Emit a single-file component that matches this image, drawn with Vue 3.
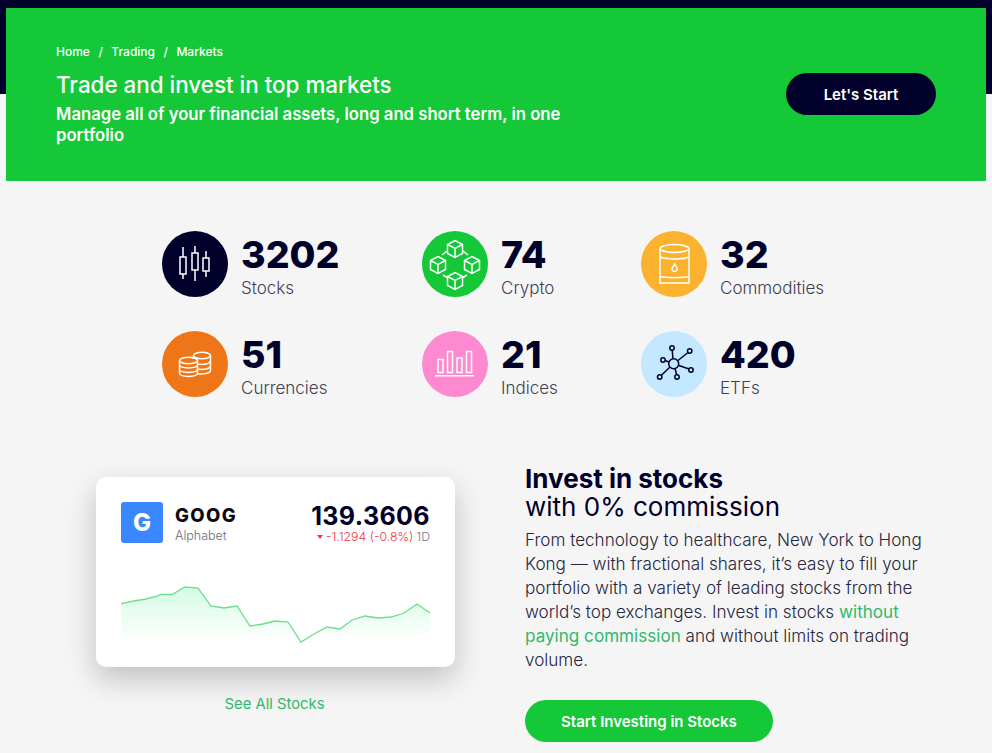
<script setup>
const line = [[121,602.7],[134,600],[146,598],[158,595],[160,593.5],[172,593.5],[185,586],[198,587],[211,605],[224,607],[237,605],[250,625],[263,623],[275,620],[288,621],[301,641],[314,633],[327,626],[340,628],[352,619],[365,615],[378,617],[391,616],[404,612],[417,603],[430,612]]
const toPath = line.map(([x, y]) => `${x - 121},${y - 580}`).join(' ')
const area = `0,60 ${toPath} 309,60`
const stats = [
  { n: '3202', l: 'Stocks', c: '#00002a', i: 'candle' },
  { n: '74', l: 'Crypto', c: '#14c837', i: 'blocks' },
  { n: '32', l: 'Commodities', c: '#fbb32f', i: 'barrel' },
  { n: '51', l: 'Currencies', c: '#ee7518', i: 'coins' },
  { n: '21', l: 'Indices', c: '#fd8ad1', i: 'bars' },
  { n: '420', l: 'ETFs', c: '#c3e8ff', i: 'net' },
]
const cube = (x, y) => `M${x} ${y-8.5}l7.500 4v9l-7.500 4l-7.500-4v-9zM${x-7.5} ${y-4.5}l7.500 4l7.500-4M${x} ${y-.5}v9`
</script>

<template>
  <div class="page">
    <div class="band"></div>
    <section class="hero">
      <div class="hero-text">
        <nav class="crumbs"><span>Home</span><i>/</i><span>Trading</span><i>/</i><span>Markets</span></nav>
        <h1>Trade and invest in top markets</h1>
        <p>Manage all of your financial assets, long and short term, in one portfolio</p>
      </div>
      <a class="btn dark">Let's Start</a>
    </section>

    <section class="stats">
      <div v-for="s in stats" :key="s.l" class="stat">
        <span class="circle" :style="{ background: s.c }">
          <svg width="66" height="66" viewBox="0 0 66 66" fill="none" :stroke="s.i === 'net' ? '#00002a' : '#fff'" stroke-width="1.5">
            <template v-if="s.i === 'candle'">
              <path d="M21 16v10M21 43v5M33 15v7M33 39v11M44 20v7M44 40v6" />
              <rect x="18" y="26" width="6" height="17" /><rect x="30" y="22" width="6" height="17" /><rect x="41" y="27" width="6" height="13" />
            </template>
            <template v-else-if="s.i === 'blocks'">
              <path :d="cube(33, 18) + cube(16, 34) + cube(50, 34) + cube(33, 50)" />
              <path d="M25 20l-5 4M41 20l5 4M21 44l5 3M45 44l-5 3" />
            </template>
            <template v-else-if="s.i === 'barrel'">
              <ellipse cx="33.500" cy="17.500" rx="14.500" ry="4" />
              <path d="M19 17.500V52h29V17.500M19 26c5 2.500 24 2.500 29 0M19 45.500c5 1.500 24 1.500 29 0" />
              <path d="M33.700 33l2.300 4a2.600 2.600 0 1 1-4.800 0z" />
            </template>
            <template v-else-if="s.i === 'coins'">
              <ellipse cx="26.500" cy="29.500" rx="9" ry="3.200" /><ellipse cx="40" cy="24.500" rx="8.500" ry="3.200" />
              <path d="M17.500 29.500v12.500c0 4.500 18 4.500 18 0V29.500M17.500 33.500c0 4.500 18 4.500 18 0M17.500 38c0 4.500 18 4.500 18 0M31.500 24.500v3.500M48.500 24.500v15c0 2.500-6 4-13 3.500M35.500 33c6 1 13 0 13-3.500M35.500 38c6 1 13 0 13-3.500" />
            </template>
            <template v-else-if="s.i === 'bars'">
              <rect x="16" y="28.500" width="5" height="13" /><rect x="25.500" y="20.500" width="5" height="21" /><rect x="35" y="27" width="5" height="14.500" /><rect x="44.500" y="20.500" width="5" height="21" />
              <path d="M13 44.700h38.700" />
            </template>
            <template v-else>
              <circle cx="32.700" cy="32.700" r="5" />
              <circle cx="31" cy="17" r="2.200" /><circle cx="48.700" cy="20" r="2.200" /><circle cx="22" cy="29" r="2.200" /><circle cx="50" cy="39" r="2.200" /><circle cx="36" cy="46" r="2.200" /><circle cx="18.700" cy="46" r="2.200" />
              <path d="M32 27.700l-.8-8.500M37 29.500l10-8M28 31l-4-1.500M38 34.500l10 3.500M34 37.500l1.700 6.300M29 36l-8.800 8.500" />
            </template>
          </svg>
        </span>
        <div class="stat-text"><strong>{{ s.n }}</strong><span>{{ s.l }}</span></div>
      </div>
    </section>

    <section class="invest">
      <div class="left">
        <article class="card">
          <header class="card-head">
            <span class="logo">G</span>
            <div class="names"><b>GOOG</b><small>Alphabet</small></div>
            <div class="quote">
              <b>139.3606</b>
              <small><i class="tri"></i><em>-1.1294 (-0.8%)</em> 1D</small>
            </div>
          </header>
          <svg class="chart" width="309" height="70" viewBox="0 0 309 70">
            <defs><linearGradient id="fade" gradientUnits="userSpaceOnUse" x1="0" y1="6" x2="0" y2="60"><stop offset="0" stop-color="#d4fbe4" /><stop offset="1" stop-color="#fff" /></linearGradient></defs>
            <polygon :points="area" fill="url(#fade)" />
            <polyline :points="toPath" fill="none" stroke="#6bdf8a" stroke-width="1.300" />
          </svg>
        </article>
        <a class="see">See All Stocks</a>
      </div>
      <div class="right">
        <h2><b>Invest in stocks</b><br />with 0% commission</h2>
        <p>From technology to healthcare, New York to Hong Kong — with fractional shares, it’s easy to fill your portfolio with a variety of leading stocks from the world’s top exchanges. Invest in stocks <a>without paying commission</a> and without limits on trading volume.</p>
        <a class="btn green">Start Investing in Stocks</a>
      </div>
    </section>
  </div>
</template>

<style>
html, body { margin: 0; background: #f5f5f5; }
</style>

<style scoped>
.page { position: relative; width: 992px; height: 753px; overflow: hidden; background: #f5f5f5; font-family: "Inter", "Open Sans", sans-serif; color: #00002a; }
.band { position: absolute; left: 0; top: 0; right: 0; height: 94px; background: #00002a; }
.hero { position: relative; box-sizing: border-box; margin: 8px 6px 0; height: 173px; padding: 0 50px; background: #14c837; color: #fff; display: flex; align-items: flex-start; justify-content: space-between; }
.hero-text { width: 530px; padding-top: 36px; }
.crumbs { display: flex; gap: 8.500px; font-size: 12px; line-height: 16px; font-weight: 500; }
.crumbs i { font-style: normal; }
h1 { margin: 9px 0 0; font-size: 22.400px; line-height: 32px; font-weight: 500; }
.hero-text p { margin: 3px 0 0; font-size: 16.700px; line-height: 21px; font-weight: 600; }
.btn { display: flex; align-items: center; justify-content: center; height: 42px; border-radius: 21px; font-size: 15px; font-weight: 600; color: #fff; }
.dark { width: 150px; margin-top: 65px; background: #00002a; }
.stats { display: grid; grid-template-columns: 260px 219px 1fr; grid-auto-rows: 100px; margin: 50px 0 0 162px; }
.stat { display: flex; gap: 13px; }
.circle { flex: none; width: 66px; height: 66px; border-radius: 50%; }
.circle svg { display: block; }
.stat-text { display: flex; flex-direction: column; }
.stat-text strong { font-size: 37.500px; line-height: 48px; font-weight: 800; }
.stat-text span { font-size: 17px; line-height: 18px; color: #3f3f56; font-weight: 300; }
.invest { display: flex; margin-top: 46px; padding-left: 96px; }
.left { width: 359px; flex: none; display: flex; flex-direction: column; align-items: center; }
.card { box-sizing: border-box; width: 359px; height: 190px; padding: 25px 25px 0; background: #fff; border-radius: 10px; box-shadow: 0 12px 30px rgba(0, 0, 0, .22); }
.card-head { display: flex; align-items: flex-start; }
.logo { width: 42px; height: 41px; flex: none; border-radius: 3px; background: #3a87ff; color: #fff; font-size: 24px; line-height: 41px; font-weight: 800; text-align: center; }
.names { margin-left: 12px; display: flex; flex-direction: column; }
.names b { font-size: 18.500px; line-height: 26px; font-weight: 800; letter-spacing: 1.400px; color: #0a0a14; }
.names small { font-size: 12.500px; line-height: 15px; color: #6b6b78; font-weight: 300; }
.quote { margin-left: auto; margin-right: 0; display: flex; flex-direction: column; align-items: flex-end; }
.quote b { font-size: 25px; line-height: 28px; font-weight: 700; letter-spacing: .4px; }
.quote small { font-size: 12.300px; line-height: 13px; color: #77778a; display: flex; align-items: center; gap: 3px; font-weight: 300; }
.quote em { font-style: normal; color: #f23645; }
.tri { width: 0; height: 0; border: 3.500px solid transparent; border-top: 4px solid #f23645; border-bottom: 0; }
.chart { display: block; margin-top: 38px; }
.see { margin-top: 27px; margin-left: -2px; font-size: 14.800px; line-height: 20px; color: #2fb96b; }
.right { margin-left: 70px; width: 402px; margin-top: -12px; }
h2 { margin: 0; font-size: 26px; line-height: 28px; font-weight: 400; }
h2 b { font-weight: 700; }
.right p { margin: 7px 0 0; font-size: 17.100px; line-height: 24px; color: #26263f; font-weight: 300; }
.right p a { color: #2fb96b; font-weight: 400; }
.green { width: 248px; margin-top: 28px; background: #14c837; }
</style>
